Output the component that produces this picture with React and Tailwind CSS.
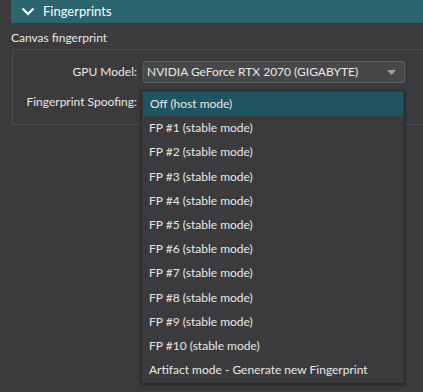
const items = [
  "Off (host mode)",
  "FP #1 (stable mode)",
  "FP #2 (stable mode)",
  "FP #3 (stable mode)",
  "FP #4 (stable mode)",
  "FP #5 (stable mode)",
  "FP #6 (stable mode)",
  "FP #7 (stable mode)",
  "FP #8 (stable mode)",
  "FP #9 (stable mode)",
  "FP #10 (stable mode)",
  "Artifact mode - Generate new Fingerprint",
];

export default function App() {
  return (
    <div className="w-[423px] h-[392px] bg-[#3b3b3d] text-[#e8e8e8] text-[12px] font-['Lato',sans-serif] whitespace-nowrap relative overflow-hidden">
      <div className="ml-[11px] h-[23px] bg-[#2a6570] flex items-center">
        <svg width="14" height="9" viewBox="0 0 14 9" className="ml-[10px]">
          <path d="M1.5 1.5 L7 7 L12.5 1.5" stroke="#ffffff" strokeWidth="2.2" fill="none" />
        </svg>
        <span className="ml-[8px] text-white text-[13px]">Fingerprints</span>
      </div>
      <div className="ml-[11px] mt-[6px] leading-[18px]">Canvas fingerprint</div>
      <div className="ml-[12px] mt-[2px] h-[76px] border-t border-l border-b border-[#4a4a4c] pt-[11px]">
        <div className="flex items-center h-[22px]">
          <span className="w-[124px] text-right">GPU Model:</span>
          <div className="ml-[6px] w-[262px] h-[22px] bg-[#48484a] border border-[#5c5c5e] rounded-[2px] flex items-center px-[3px]">
            <span className="flex-1">NVIDIA GeForce RTX 2070 (GIGABYTE)</span>
            <svg width="9" height="5" viewBox="0 0 9 5" className="mr-[5px]">
              <path d="M0 0 L9 0 L4.5 5 Z" fill="#a0a0a0" />
            </svg>
          </div>
        </div>
        <div className="flex items-center h-[22px] mt-[8px]">
          <span className="w-[124px] text-right">Fingerprint Spoofing:</span>
        </div>
      </div>
      <div className="absolute left-[141px] top-[90px] w-[264px] bg-[#3b3b3d] border border-[#2a2a2c] py-[1px] shadow-[0_1px_3px_rgba(0,0,0,0.4)]">
        {items.map((t, i) => (
          <div
            key={t}
            className={
              "h-[24.2px] flex items-center px-[7px] " +
              (i === 0 ? "bg-[#1f5560] mx-[1px]" : "")
            }
          >
            {t}
          </div>
        ))}
      </div>
    </div>
  );
}
